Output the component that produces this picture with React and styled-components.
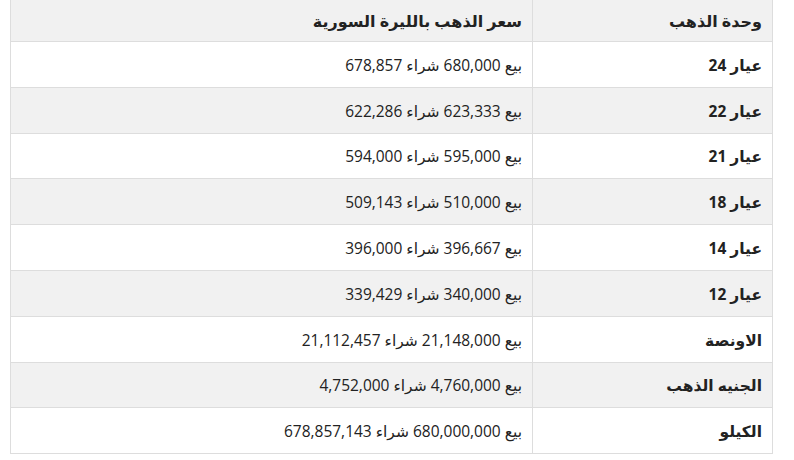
import React from 'react';
import styled, { createGlobalStyle } from 'styled-components';

const GlobalStyle = createGlobalStyle`
  html, body {
    margin: 0;
    padding: 0;
    background: #fff;
  }
  body {
    font-family: "Open Sans", "DejaVu Sans", "Noto Sans", sans-serif;
    color: #222;
  }
`;

const Wrapper = styled.div`
  padding: 0 21px 0 10px;
`;

const Table = styled.table`
  width: 100%;
  border-collapse: collapse;
  direction: rtl;
  border-left: 1px solid #ddd;
  border-right: 1px solid #ddd;
`;

const HeadCell = styled.th`
  height: 39px;
  padding: 1px 10px 1px;
  background: #f1f1f1;
  text-align: right;
  font-size: 16px;
  font-weight: 700;
  color: #222;
  border-bottom: 1px solid #ddd;
  border-left: 1px solid #ddd;
  width: ${(p) => p.$width || 'auto'};
`;

const Row = styled.tr`
  background: ${(p) => (p.$shaded ? '#f1f1f1' : '#fff')};
`;

const Cell = styled.td`
  height: 43.8px;
  padding: 1px 10px 0;
  text-align: right;
  font-size: 15.5px;
  font-weight: ${(p) => (p.$bold ? 700 : 400)};
  color: #222;
  border-bottom: 1px solid #ddd;
  border-left: 1px solid #ddd;
`;

const rows = [
  ['عيار 24', 'بيع 680,000 شراء 678,857'],
  ['عيار 22', 'بيع 623,333 شراء 622,286'],
  ['عيار 21', 'بيع 595,000 شراء 594,000'],
  ['عيار 18', 'بيع 510,000 شراء 509,143'],
  ['عيار 14', 'بيع 396,667 شراء 396,000'],
  ['عيار 12', 'بيع 340,000 شراء 339,429'],
  ['الاونصة', 'بيع 21,148,000 شراء 21,112,457'],
  ['الجنيه الذهب', 'بيع 4,760,000 شراء 4,752,000'],
  ['الكيلو', 'بيع 680,000,000 شراء 678,857,143'],
];

export default function App() {
  return (
    <>
      <GlobalStyle />
      <Wrapper>
        <Table>
          <thead>
            <tr>
              <HeadCell $width="219px">وحدة الذهب</HeadCell>
              <HeadCell>سعر الذهب بالليرة السورية</HeadCell>
            </tr>
          </thead>
          <tbody>
            {rows.map(([unit, price], i) => (
              <Row key={unit} $shaded={i % 2 === 1}>
                <Cell $bold>{unit}</Cell>
                <Cell>{price}</Cell>
              </Row>
            ))}
          </tbody>
        </Table>
      </Wrapper>
    </>
  );
}
